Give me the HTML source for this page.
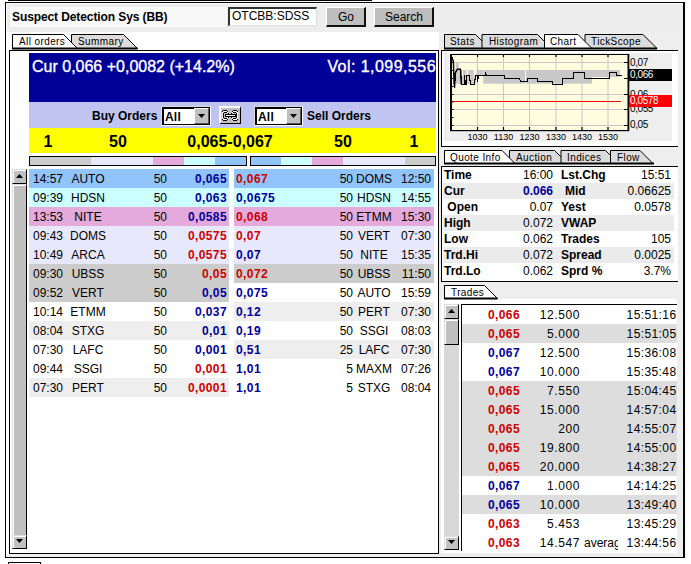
<!DOCTYPE html>
<html><head><meta charset="utf-8"><style>
html,body{margin:0;padding:0;}
body{width:691px;height:564px;overflow:hidden;position:relative;background:#fff;font-family:"Liberation Sans", sans-serif;color:#000;}
body div, body svg{position:absolute;}
.t{white-space:pre;}
</style></head><body>
<div style="left:8px;top:0px;width:364px;height:1px;background:#000"></div><div style="left:5px;top:2px;width:680px;height:556px;background:#eeeeee;border-left:1px solid #000;border-top:1px solid #000;border-right:2px solid #000;border-bottom:1px solid #000;box-sizing:border-box;box-shadow:inset 1px 1px 0 #fff"></div><div style="left:7px;top:4px;width:676px;height:28px;background:#ededed"></div><div style="left:7px;top:32px;width:432px;height:522px;background:#fff"></div><div style="left:441px;top:299px;width:236px;height:254px;background:#fff"></div><div style="left:10px;top:7px;width:217px;height:20px;background:#f9f9f9"></div><div class="t" style="left:12px;top:9px;text-align:left;font-weight:bold;font-size:12px;line-height:16px;letter-spacing:-0.1px">Suspect Detection Sys (BB)</div><div style="left:228px;top:7px;width:89px;height:19px;background:#fff;border-top:2px solid #333;border-left:2px solid #333;border-right:1px solid #ddd;border-bottom:1px solid #ddd;box-sizing:border-box"></div><div class="t" style="left:232px;top:9px;text-align:left;font-size:12px;line-height:15px">OTCBB:SDSS</div><div style="left:326px;top:7px;width:40px;height:20px;background:#bebebe;border-top:1px solid #fff;border-left:1px solid #fff;border-right:2px solid #111;border-bottom:2px solid #111;box-sizing:border-box"></div><div class="t" style="left:326px;top:10px;width:40px;text-align:center;font-size:12px;line-height:14px">Go</div><div style="left:374px;top:7px;width:60px;height:20px;background:#bebebe;border-top:1px solid #fff;border-left:1px solid #fff;border-right:2px solid #111;border-bottom:2px solid #111;box-sizing:border-box"></div><div class="t" style="left:374px;top:10px;width:60px;text-align:center;font-size:12px;line-height:14px">Search</div><svg style="left:0;top:0" width="691" height="564"><polygon points="71.5,48.5 71.5,34.5 123.5,34.5 137.5,48.5" fill="#dcdcdc" stroke="#000" stroke-width="1"/><polygon points="12.5,48.5 12.5,34.5 63.5,34.5 77.5,48.5" fill="#ffffff" stroke="#000" stroke-width="1"/><rect x="12.0" y="47.5" width="125.5" height="2" fill="#000"/></svg><div class="t" style="left:19px;top:36.0px;text-align:left;font-size:10px;line-height:12px;letter-spacing:0.4px">All orders</div><div class="t" style="left:78px;top:36.0px;text-align:left;font-size:10px;line-height:12px;letter-spacing:0.4px">Summary</div><div style="left:9px;top:50px;width:430px;height:504px;background:#fff;border:1px solid #000;box-sizing:border-box"></div><div style="left:29px;top:53px;width:407px;height:49px;background:#000099"></div><div class="t" style="left:32px;top:57px;text-align:left;color:#fff;font-size:16px;line-height:19px;-webkit-text-stroke:0.35px #fff">Cur 0,066 +0,0082 (+14.2%)</div><div class="t" style="left:236px;top:57px;width:200px;text-align:right;color:#fff;font-size:16px;line-height:19px;letter-spacing:0.45px;-webkit-text-stroke:0.35px #fff">Vol: 1,099,556</div><div style="left:29px;top:102px;width:407px;height:26px;background:#c0c4f0"></div><div class="t" style="left:92px;top:109px;text-align:left;font-weight:bold;font-size:12px;line-height:15px">Buy Orders</div><div class="t" style="left:307px;top:109px;text-align:left;font-weight:bold;font-size:12px;line-height:15px">Sell Orders</div><div style="left:161px;top:106px;width:50px;height:20px;border-top:1px solid #dcdcdc;border-left:1px solid #dcdcdc;border-right:1px solid #fff;border-bottom:1px solid #fff;box-sizing:border-box"></div><div style="left:162px;top:107px;width:48px;height:18px;background:#fff;border:1px solid #000;border-top-width:2px;border-left-width:2px;box-sizing:border-box"></div><div class="t" style="left:165px;top:110px;text-align:left;font-weight:bold;font-size:12px;line-height:14px;letter-spacing:0.2px">All</div><div style="left:194px;top:108px;width:15px;height:16px;background:#c0c0c0;border-top:1px solid #fff;border-left:1px solid #fff;border-right:1px solid #555;border-bottom:1px solid #555;box-sizing:border-box"></div><svg style="left:198px;top:114px" width="8" height="5"><polygon points="0,0 7,0 3.5,4" fill="#000"/></svg><div style="left:254px;top:106px;width:49px;height:20px;border-top:1px solid #dcdcdc;border-left:1px solid #dcdcdc;border-right:1px solid #fff;border-bottom:1px solid #fff;box-sizing:border-box"></div><div style="left:255px;top:107px;width:47px;height:18px;background:#fff;border:1px solid #000;border-top-width:2px;border-left-width:2px;box-sizing:border-box"></div><div class="t" style="left:258px;top:110px;text-align:left;font-weight:bold;font-size:12px;line-height:14px;letter-spacing:0.2px">All</div><div style="left:286px;top:108px;width:15px;height:16px;background:#c0c0c0;border-top:1px solid #fff;border-left:1px solid #fff;border-right:1px solid #555;border-bottom:1px solid #555;box-sizing:border-box"></div><svg style="left:290px;top:114px" width="8" height="5"><polygon points="0,0 7,0 3.5,4" fill="#000"/></svg><div style="left:219px;top:106px;width:22px;height:18px;background:#c0c0c0;border-top:2px solid #fff;border-left:2px solid #fff;border-right:1px solid #000;border-bottom:1px solid #000;box-sizing:border-box"></div><svg style="left:220px;top:108px" width="20" height="15" shape-rendering="crispEdges"><rect x="3" y="2" width="4" height="1" fill="#000"/><rect x="13" y="2" width="4" height="1" fill="#000"/><rect x="2" y="3" width="1" height="1" fill="#000"/><rect x="17" y="3" width="1" height="1" fill="#000"/><rect x="7" y="3" width="1" height="1" fill="#000"/><rect x="12" y="3" width="1" height="1" fill="#000"/><rect x="3" y="3" width="4" height="1" fill="#fff"/><rect x="13" y="3" width="4" height="1" fill="#fff"/><rect x="2" y="4" width="1" height="7" fill="#fff"/><rect x="17" y="4" width="1" height="7" fill="#fff"/><rect x="3" y="12" width="4" height="1" fill="#000"/><rect x="13" y="12" width="4" height="1" fill="#000"/><rect x="2" y="11" width="1" height="1" fill="#000"/><rect x="17" y="11" width="1" height="1" fill="#000"/><rect x="7" y="11" width="1" height="1" fill="#000"/><rect x="12" y="11" width="1" height="1" fill="#000"/><rect x="3" y="11" width="4" height="1" fill="#fff"/><rect x="13" y="11" width="4" height="1" fill="#fff"/><rect x="4" y="4" width="3" height="1" fill="#000"/><rect x="13" y="4" width="3" height="1" fill="#000"/><rect x="3" y="5" width="1" height="5" fill="#000"/><rect x="16" y="5" width="1" height="5" fill="#000"/><rect x="4" y="10" width="3" height="1" fill="#000"/><rect x="13" y="10" width="3" height="1" fill="#000"/><rect x="7" y="4" width="1" height="1" fill="#fff"/><rect x="12" y="4" width="1" height="1" fill="#fff"/><rect x="7" y="10" width="1" height="1" fill="#fff"/><rect x="12" y="10" width="1" height="1" fill="#fff"/><rect x="8" y="5" width="1" height="1" fill="#000"/><rect x="11" y="5" width="1" height="1" fill="#000"/><rect x="8" y="9" width="1" height="1" fill="#000"/><rect x="11" y="9" width="1" height="1" fill="#000"/><rect x="5" y="6" width="11" height="3" fill="#000"/><rect x="6" y="7" width="9" height="1" fill="#fff"/></svg><div style="left:29px;top:128px;width:407px;height:25px;background:#ffff00"></div><div class="t" style="left:34px;top:133px;width:28px;text-align:center;font-weight:bold;font-size:16px;line-height:18px">1</div><div class="t" style="left:100px;top:133px;width:36px;text-align:center;font-weight:bold;font-size:16px;line-height:18px">50</div><div class="t" style="left:160px;top:133px;width:140px;text-align:center;font-weight:bold;font-size:16px;line-height:18px">0,065-0,067</div><div class="t" style="left:325px;top:133px;width:36px;text-align:center;font-weight:bold;font-size:16px;line-height:18px">50</div><div class="t" style="left:400px;top:133px;width:28px;text-align:center;font-weight:bold;font-size:16px;line-height:18px">1</div><div style="left:29px;top:156px;width:218px;height:10px;border:1px solid #000;box-sizing:border-box;background:#fff"></div><div style="left:30px;top:157px;width:61px;height:8px;background:#cccccc"></div><div style="left:91px;top:157px;width:62px;height:8px;background:#e8e8fc"></div><div style="left:153px;top:157px;width:31px;height:8px;background:#e4aadc"></div><div style="left:184px;top:157px;width:31px;height:8px;background:#ccffff"></div><div style="left:215px;top:157px;width:31px;height:8px;background:#90c4fa"></div><div style="left:250px;top:156px;width:186px;height:10px;border:1px solid #000;box-sizing:border-box;background:#fff"></div><div style="left:251px;top:157px;width:30px;height:8px;background:#90c4fa"></div><div style="left:281px;top:157px;width:31px;height:8px;background:#ccffff"></div><div style="left:312px;top:157px;width:31px;height:8px;background:#e4aadc"></div><div style="left:343px;top:157px;width:62px;height:8px;background:#e8e8fc"></div><div style="left:405px;top:157px;width:30px;height:8px;background:#cccccc"></div><div style="left:29px;top:169px;width:200px;height:19px;background:#90c4fa"></div><div class="t" style="left:33px;top:172px;text-align:left;font-size:12px;line-height:15px">14:57</div><div class="t" style="left:60px;top:172px;width:56px;text-align:center;font-size:12px;line-height:15px">AUTO</div><div class="t" style="left:130px;top:172px;width:37px;text-align:right;font-size:12px;line-height:15px">50</div><div class="t" style="left:150px;top:172px;width:77px;text-align:right;font-size:12px;line-height:15px;font-weight:bold;letter-spacing:0.4px;color:#000099">0,065</div><div style="left:29px;top:188px;width:200px;height:19px;background:#ccffff"></div><div class="t" style="left:33px;top:191px;text-align:left;font-size:12px;line-height:15px">09:39</div><div class="t" style="left:60px;top:191px;width:56px;text-align:center;font-size:12px;line-height:15px">HDSN</div><div class="t" style="left:130px;top:191px;width:37px;text-align:right;font-size:12px;line-height:15px">50</div><div class="t" style="left:150px;top:191px;width:77px;text-align:right;font-size:12px;line-height:15px;font-weight:bold;letter-spacing:0.4px;color:#000099">0,063</div><div style="left:29px;top:207px;width:200px;height:19px;background:#e4aadc"></div><div class="t" style="left:33px;top:210px;text-align:left;font-size:12px;line-height:15px">13:53</div><div class="t" style="left:60px;top:210px;width:56px;text-align:center;font-size:12px;line-height:15px">NITE</div><div class="t" style="left:130px;top:210px;width:37px;text-align:right;font-size:12px;line-height:15px">50</div><div class="t" style="left:150px;top:210px;width:77px;text-align:right;font-size:12px;line-height:15px;font-weight:bold;letter-spacing:0.4px;color:#000099">0,0585</div><div style="left:29px;top:226px;width:200px;height:19px;background:#e8e8fc"></div><div class="t" style="left:33px;top:229px;text-align:left;font-size:12px;line-height:15px">09:43</div><div class="t" style="left:60px;top:229px;width:56px;text-align:center;font-size:12px;line-height:15px">DOMS</div><div class="t" style="left:130px;top:229px;width:37px;text-align:right;font-size:12px;line-height:15px">50</div><div class="t" style="left:150px;top:229px;width:77px;text-align:right;font-size:12px;line-height:15px;font-weight:bold;letter-spacing:0.4px;color:#cc0000">0,0575</div><div style="left:29px;top:245px;width:200px;height:19px;background:#e8e8fc"></div><div class="t" style="left:33px;top:248px;text-align:left;font-size:12px;line-height:15px">10:49</div><div class="t" style="left:60px;top:248px;width:56px;text-align:center;font-size:12px;line-height:15px">ARCA</div><div class="t" style="left:130px;top:248px;width:37px;text-align:right;font-size:12px;line-height:15px">50</div><div class="t" style="left:150px;top:248px;width:77px;text-align:right;font-size:12px;line-height:15px;font-weight:bold;letter-spacing:0.4px;color:#cc0000">0,0575</div><div style="left:29px;top:264px;width:200px;height:19px;background:#cccccc"></div><div class="t" style="left:33px;top:267px;text-align:left;font-size:12px;line-height:15px">09:30</div><div class="t" style="left:60px;top:267px;width:56px;text-align:center;font-size:12px;line-height:15px">UBSS</div><div class="t" style="left:130px;top:267px;width:37px;text-align:right;font-size:12px;line-height:15px">50</div><div class="t" style="left:150px;top:267px;width:77px;text-align:right;font-size:12px;line-height:15px;font-weight:bold;letter-spacing:0.4px;color:#cc0000">0,05</div><div style="left:29px;top:283px;width:200px;height:19px;background:#cccccc"></div><div class="t" style="left:33px;top:286px;text-align:left;font-size:12px;line-height:15px">09:52</div><div class="t" style="left:60px;top:286px;width:56px;text-align:center;font-size:12px;line-height:15px">VERT</div><div class="t" style="left:130px;top:286px;width:37px;text-align:right;font-size:12px;line-height:15px">50</div><div class="t" style="left:150px;top:286px;width:77px;text-align:right;font-size:12px;line-height:15px;font-weight:bold;letter-spacing:0.4px;color:#000099">0,05</div><div style="left:29px;top:302px;width:200px;height:19px;background:#ffffff"></div><div class="t" style="left:33px;top:305px;text-align:left;font-size:12px;line-height:15px">10:14</div><div class="t" style="left:60px;top:305px;width:56px;text-align:center;font-size:12px;line-height:15px">ETMM</div><div class="t" style="left:130px;top:305px;width:37px;text-align:right;font-size:12px;line-height:15px">50</div><div class="t" style="left:150px;top:305px;width:77px;text-align:right;font-size:12px;line-height:15px;font-weight:bold;letter-spacing:0.4px;color:#000099">0,037</div><div style="left:29px;top:321px;width:200px;height:19px;background:#eeeeee"></div><div class="t" style="left:33px;top:324px;text-align:left;font-size:12px;line-height:15px">08:04</div><div class="t" style="left:60px;top:324px;width:56px;text-align:center;font-size:12px;line-height:15px">STXG</div><div class="t" style="left:130px;top:324px;width:37px;text-align:right;font-size:12px;line-height:15px">50</div><div class="t" style="left:150px;top:324px;width:77px;text-align:right;font-size:12px;line-height:15px;font-weight:bold;letter-spacing:0.4px;color:#000099">0,01</div><div style="left:29px;top:340px;width:200px;height:19px;background:#ffffff"></div><div class="t" style="left:33px;top:343px;text-align:left;font-size:12px;line-height:15px">07:30</div><div class="t" style="left:60px;top:343px;width:56px;text-align:center;font-size:12px;line-height:15px">LAFC</div><div class="t" style="left:130px;top:343px;width:37px;text-align:right;font-size:12px;line-height:15px">50</div><div class="t" style="left:150px;top:343px;width:77px;text-align:right;font-size:12px;line-height:15px;font-weight:bold;letter-spacing:0.4px;color:#000099">0,001</div><div style="left:29px;top:359px;width:200px;height:19px;background:#ffffff"></div><div class="t" style="left:33px;top:362px;text-align:left;font-size:12px;line-height:15px">09:44</div><div class="t" style="left:60px;top:362px;width:56px;text-align:center;font-size:12px;line-height:15px">SSGI</div><div class="t" style="left:130px;top:362px;width:37px;text-align:right;font-size:12px;line-height:15px">50</div><div class="t" style="left:150px;top:362px;width:77px;text-align:right;font-size:12px;line-height:15px;font-weight:bold;letter-spacing:0.4px;color:#cc0000">0,001</div><div style="left:29px;top:378px;width:200px;height:19px;background:#eeeeee"></div><div class="t" style="left:33px;top:381px;text-align:left;font-size:12px;line-height:15px">07:30</div><div class="t" style="left:60px;top:381px;width:56px;text-align:center;font-size:12px;line-height:15px">PERT</div><div class="t" style="left:130px;top:381px;width:37px;text-align:right;font-size:12px;line-height:15px">50</div><div class="t" style="left:150px;top:381px;width:77px;text-align:right;font-size:12px;line-height:15px;font-weight:bold;letter-spacing:0.4px;color:#cc0000">0,0001</div><div style="left:234px;top:169px;width:200px;height:19px;background:#90c4fa"></div><div class="t" style="left:236px;top:172px;text-align:left;font-size:12px;line-height:15px;font-weight:bold;letter-spacing:0.4px;color:#cc0000">0,067</div><div class="t" style="left:316px;top:172px;width:37px;text-align:right;font-size:12px;line-height:15px">50</div><div class="t" style="left:350px;top:172px;width:48px;text-align:center;font-size:12px;line-height:15px">DOMS</div><div class="t" style="left:380px;top:172px;width:51px;text-align:right;font-size:12px;line-height:15px">12:50</div><div style="left:234px;top:188px;width:200px;height:19px;background:#ccffff"></div><div class="t" style="left:236px;top:191px;text-align:left;font-size:12px;line-height:15px;font-weight:bold;letter-spacing:0.4px;color:#000099">0,0675</div><div class="t" style="left:316px;top:191px;width:37px;text-align:right;font-size:12px;line-height:15px">50</div><div class="t" style="left:350px;top:191px;width:48px;text-align:center;font-size:12px;line-height:15px">HDSN</div><div class="t" style="left:380px;top:191px;width:51px;text-align:right;font-size:12px;line-height:15px">14:55</div><div style="left:234px;top:207px;width:200px;height:19px;background:#e4aadc"></div><div class="t" style="left:236px;top:210px;text-align:left;font-size:12px;line-height:15px;font-weight:bold;letter-spacing:0.4px;color:#cc0000">0,068</div><div class="t" style="left:316px;top:210px;width:37px;text-align:right;font-size:12px;line-height:15px">50</div><div class="t" style="left:350px;top:210px;width:48px;text-align:center;font-size:12px;line-height:15px">ETMM</div><div class="t" style="left:380px;top:210px;width:51px;text-align:right;font-size:12px;line-height:15px">15:30</div><div style="left:234px;top:226px;width:200px;height:19px;background:#e8e8fc"></div><div class="t" style="left:236px;top:229px;text-align:left;font-size:12px;line-height:15px;font-weight:bold;letter-spacing:0.4px;color:#cc0000">0,07</div><div class="t" style="left:316px;top:229px;width:37px;text-align:right;font-size:12px;line-height:15px">50</div><div class="t" style="left:350px;top:229px;width:48px;text-align:center;font-size:12px;line-height:15px">VERT</div><div class="t" style="left:380px;top:229px;width:51px;text-align:right;font-size:12px;line-height:15px">07:30</div><div style="left:234px;top:245px;width:200px;height:19px;background:#e8e8fc"></div><div class="t" style="left:236px;top:248px;text-align:left;font-size:12px;line-height:15px;font-weight:bold;letter-spacing:0.4px;color:#000099">0,07</div><div class="t" style="left:316px;top:248px;width:37px;text-align:right;font-size:12px;line-height:15px">50</div><div class="t" style="left:350px;top:248px;width:48px;text-align:center;font-size:12px;line-height:15px">NITE</div><div class="t" style="left:380px;top:248px;width:51px;text-align:right;font-size:12px;line-height:15px">15:35</div><div style="left:234px;top:264px;width:200px;height:19px;background:#cccccc"></div><div class="t" style="left:236px;top:267px;text-align:left;font-size:12px;line-height:15px;font-weight:bold;letter-spacing:0.4px;color:#cc0000">0,072</div><div class="t" style="left:316px;top:267px;width:37px;text-align:right;font-size:12px;line-height:15px">50</div><div class="t" style="left:350px;top:267px;width:48px;text-align:center;font-size:12px;line-height:15px">UBSS</div><div class="t" style="left:380px;top:267px;width:51px;text-align:right;font-size:12px;line-height:15px">11:50</div><div style="left:234px;top:283px;width:200px;height:19px;background:#ffffff"></div><div class="t" style="left:236px;top:286px;text-align:left;font-size:12px;line-height:15px;font-weight:bold;letter-spacing:0.4px;color:#000099">0,075</div><div class="t" style="left:316px;top:286px;width:37px;text-align:right;font-size:12px;line-height:15px">50</div><div class="t" style="left:350px;top:286px;width:48px;text-align:center;font-size:12px;line-height:15px">AUTO</div><div class="t" style="left:380px;top:286px;width:51px;text-align:right;font-size:12px;line-height:15px">15:59</div><div style="left:234px;top:302px;width:200px;height:19px;background:#eeeeee"></div><div class="t" style="left:236px;top:305px;text-align:left;font-size:12px;line-height:15px;font-weight:bold;letter-spacing:0.4px;color:#000099">0,12</div><div class="t" style="left:316px;top:305px;width:37px;text-align:right;font-size:12px;line-height:15px">50</div><div class="t" style="left:350px;top:305px;width:48px;text-align:center;font-size:12px;line-height:15px">PERT</div><div class="t" style="left:380px;top:305px;width:51px;text-align:right;font-size:12px;line-height:15px">07:30</div><div style="left:234px;top:321px;width:200px;height:19px;background:#ffffff"></div><div class="t" style="left:236px;top:324px;text-align:left;font-size:12px;line-height:15px;font-weight:bold;letter-spacing:0.4px;color:#000099">0,19</div><div class="t" style="left:316px;top:324px;width:37px;text-align:right;font-size:12px;line-height:15px">50</div><div class="t" style="left:350px;top:324px;width:48px;text-align:center;font-size:12px;line-height:15px">SSGI</div><div class="t" style="left:380px;top:324px;width:51px;text-align:right;font-size:12px;line-height:15px">08:03</div><div style="left:234px;top:340px;width:200px;height:19px;background:#eeeeee"></div><div class="t" style="left:236px;top:343px;text-align:left;font-size:12px;line-height:15px;font-weight:bold;letter-spacing:0.4px;color:#000099">0,51</div><div class="t" style="left:316px;top:343px;width:37px;text-align:right;font-size:12px;line-height:15px">25</div><div class="t" style="left:350px;top:343px;width:48px;text-align:center;font-size:12px;line-height:15px">LAFC</div><div class="t" style="left:380px;top:343px;width:51px;text-align:right;font-size:12px;line-height:15px">07:30</div><div style="left:234px;top:359px;width:200px;height:19px;background:#ffffff"></div><div class="t" style="left:236px;top:362px;text-align:left;font-size:12px;line-height:15px;font-weight:bold;letter-spacing:0.4px;color:#000099">1,01</div><div class="t" style="left:316px;top:362px;width:37px;text-align:right;font-size:12px;line-height:15px">5</div><div class="t" style="left:350px;top:362px;width:48px;text-align:center;font-size:12px;line-height:15px">MAXM</div><div class="t" style="left:380px;top:362px;width:51px;text-align:right;font-size:12px;line-height:15px">07:26</div><div style="left:234px;top:378px;width:200px;height:19px;background:#ffffff"></div><div class="t" style="left:236px;top:381px;text-align:left;font-size:12px;line-height:15px;font-weight:bold;letter-spacing:0.4px;color:#000099">1,01</div><div class="t" style="left:316px;top:381px;width:37px;text-align:right;font-size:12px;line-height:15px">5</div><div class="t" style="left:350px;top:381px;width:48px;text-align:center;font-size:12px;line-height:15px">STXG</div><div class="t" style="left:380px;top:381px;width:51px;text-align:right;font-size:12px;line-height:15px">08:04</div><div style="left:12px;top:169px;width:15px;height:15px;background:#c0c0c0;border-top:1px solid #dcdcdc;border-left:1px solid #dcdcdc;box-shadow:inset 1px 1px 0 #fff;border-right:1px solid #000;box-sizing:border-box;border-bottom:1px solid #000"></div><svg style="left:16px;top:174px" width="8" height="5"><polygon points="0,4 7,4 3.5,0" fill="#000"/></svg><div style="left:12px;top:184px;width:15px;height:351px;background:#c0c0c0;border-top:1px solid #dcdcdc;border-left:1px solid #dcdcdc;box-shadow:inset 1px 1px 0 #fff;border-right:1px solid #000;box-sizing:border-box"></div><div style="left:12px;top:535px;width:15px;height:14px;background:#c0c0c0;border-top:1px solid #dcdcdc;border-left:1px solid #dcdcdc;box-shadow:inset 1px 1px 0 #fff;border-right:1px solid #000;box-sizing:border-box;border-bottom:1px solid #000"></div><svg style="left:16px;top:539px" width="8" height="5"><polygon points="0,0 7,0 3.5,4" fill="#000"/></svg><svg style="left:0;top:0" width="691" height="564"><polygon points="444.5,48.5 444.5,34.5 475.5,34.5 489.5,48.5" fill="#dcdcdc" stroke="#000" stroke-width="1"/><polygon points="482,48.5 482,34.5 537.5,34.5 551.5,48.5" fill="#dcdcdc" stroke="#000" stroke-width="1"/><polygon points="585,48.5 585,34.5 643,34.5 657.0,48.5" fill="#dcdcdc" stroke="#000" stroke-width="1"/><polygon points="544.5,48.5 544.5,34.5 578,34.5 592.0,48.5" fill="#ffffff" stroke="#000" stroke-width="1"/><rect x="444.0" y="47.5" width="213.0" height="2" fill="#000"/></svg><div class="t" style="left:450px;top:36.0px;text-align:left;font-size:10px;line-height:12px;letter-spacing:0.4px">Stats</div><div class="t" style="left:489px;top:36.0px;text-align:left;font-size:10px;line-height:12px;letter-spacing:0.4px">Histogram</div><div class="t" style="left:550px;top:36.0px;text-align:left;font-size:10px;line-height:12px;letter-spacing:0.4px">Chart</div><div class="t" style="left:591px;top:36.0px;text-align:left;font-size:10px;line-height:12px;letter-spacing:0.4px">TickScope</div><div style="left:441px;top:50px;width:237px;height:97px;background:#ffffff;border-left:1px solid #000;border-top:1px solid #000;border-bottom:1px solid #000;box-shadow:inset 1px 1px #fff;box-sizing:border-box"></div><div style="left:444px;top:53px;width:228px;height:88px;background:#eeeeee"></div><div style="left:449px;top:53px;width:1px;height:78px;background:#fff"></div><svg style="left:0;top:0" width="691" height="564"><rect x="451" y="54.5" width="177" height="76" fill="#fffce0"/><line x1="477.5" y1="55" x2="477.5" y2="130" stroke="#c8c8c8" stroke-width="1"/><line x1="503.5" y1="55" x2="503.5" y2="130" stroke="#c8c8c8" stroke-width="1"/><line x1="529.5" y1="55" x2="529.5" y2="130" stroke="#c8c8c8" stroke-width="1"/><line x1="556" y1="55" x2="556" y2="130" stroke="#c8c8c8" stroke-width="1"/><line x1="582" y1="55" x2="582" y2="130" stroke="#c8c8c8" stroke-width="1"/><line x1="608" y1="55" x2="608" y2="130" stroke="#c8c8c8" stroke-width="1"/><line x1="452" y1="62.5" x2="627" y2="62.5" stroke="#c8c8c8" stroke-width="1"/><line x1="452" y1="94.5" x2="627" y2="94.5" stroke="#c8c8c8" stroke-width="1"/><line x1="452" y1="109.5" x2="627" y2="109.5" stroke="#c8c8c8" stroke-width="1"/><line x1="452" y1="125.5" x2="627" y2="125.5" stroke="#c8c8c8" stroke-width="1"/><rect x="455.8" y="62.6" width="2.8999999999999773" height="21.1" fill="#c8c8c8"/><rect x="458.7" y="70" width="2.0" height="13.700000000000003" fill="#c8c8c8"/><rect x="460.7" y="75.5" width="2.3000000000000114" height="8.200000000000003" fill="#c8c8c8"/><rect x="463" y="70" width="3.5" height="13.700000000000003" fill="#c8c8c8"/><rect x="466.5" y="75.5" width="1.6999999999999886" height="8.200000000000003" fill="#c8c8c8"/><rect x="468.2" y="70" width="5.5" height="13.700000000000003" fill="#c8c8c8"/><rect x="473.7" y="75.5" width="2.6000000000000227" height="8.200000000000003" fill="#c8c8c8"/><rect x="476.3" y="70" width="7.0" height="5.5" fill="#c8c8c8"/><rect x="483.3" y="70" width="41.69999999999999" height="13.700000000000003" fill="#c8c8c8"/><rect x="526" y="70" width="66" height="13.700000000000003" fill="#c8c8c8"/><rect x="592" y="70" width="28" height="7" fill="#c8c8c8"/><line x1="452" y1="101.5" x2="621" y2="101.5" stroke="#ff0000" stroke-width="1" shape-rendering="crispEdges"/><polyline fill="none" stroke="#000" stroke-width="1.4" points="451,56.5 452.3,58.7 453.2,61 453.5,63 454,83 454.6,87.5 455.3,73 456.3,70.7 457.5,69.3 460.4,69.3 460.8,70.5 461.2,84.3"/><polyline fill="none" stroke="#000" stroke-width="1.1" stroke-linejoin="miter" shape-rendering="crispEdges" points="451.5,56.5 452.5,58.5 453.5,61.5 453.5,63.5 454.5,83.5 454.5,87.5 455.5,73.5 456.5,70.5 457.5,69.5 460.5,69.5 460.5,70.5 461.5,84.5 464.5,84.5 464.5,75.5 465.5,84.5 466.5,84.5 466.5,75.5 469.5,75.5 470.5,84.5 474.5,84.5 475.5,75.5 477.5,75.5 477.5,81.5 478.5,75.5 485.5,75.5 485.5,72.5 486.5,75.5 504.5,75.5 504.5,78.5 519.5,78.5 520.5,81.5 527.5,81.5 527.5,78.5 537.5,78.5 537.5,81.5 552.5,81.5 552.5,84.5 562.5,84.5 562.5,78.5 573.5,78.5 573.5,72.5 584.5,72.5 584.5,78.5 609.5,78.5 609.5,72.5 616.5,72.5 616.5,75.5 621.5,75.5"/><rect x="450" y="54" width="179" height="1" fill="#000"/><rect x="450" y="54" width="2" height="77" fill="#000"/><rect x="627.5" y="54" width="1.8" height="77" fill="#000"/><rect x="450" y="130" width="179" height="1.2" fill="#000"/><line x1="477.5" y1="127" x2="477.5" y2="130" stroke="#000" stroke-width="1.2"/><line x1="477.5" y1="55" x2="477.5" y2="57" stroke="#000" stroke-width="1.2"/><line x1="503.5" y1="127" x2="503.5" y2="130" stroke="#000" stroke-width="1.2"/><line x1="503.5" y1="55" x2="503.5" y2="57" stroke="#000" stroke-width="1.2"/><line x1="529.5" y1="127" x2="529.5" y2="130" stroke="#000" stroke-width="1.2"/><line x1="529.5" y1="55" x2="529.5" y2="57" stroke="#000" stroke-width="1.2"/><line x1="556" y1="127" x2="556" y2="130" stroke="#000" stroke-width="1.2"/><line x1="556" y1="55" x2="556" y2="57" stroke="#000" stroke-width="1.2"/><line x1="582" y1="127" x2="582" y2="130" stroke="#000" stroke-width="1.2"/><line x1="582" y1="55" x2="582" y2="57" stroke="#000" stroke-width="1.2"/><line x1="608" y1="127" x2="608" y2="130" stroke="#000" stroke-width="1.2"/><line x1="608" y1="55" x2="608" y2="57" stroke="#000" stroke-width="1.2"/><line x1="452" y1="62.5" x2="453.5" y2="62.5" stroke="#000" stroke-width="1"/><line x1="452" y1="70.5" x2="453.5" y2="70.5" stroke="#000" stroke-width="1"/><line x1="452" y1="78.5" x2="453.5" y2="78.5" stroke="#000" stroke-width="1"/><line x1="452" y1="86.5" x2="453.5" y2="86.5" stroke="#000" stroke-width="1"/><line x1="452" y1="94.5" x2="453.5" y2="94.5" stroke="#000" stroke-width="1"/><line x1="452" y1="102" x2="453.5" y2="102" stroke="#000" stroke-width="1"/><line x1="452" y1="109.5" x2="453.5" y2="109.5" stroke="#000" stroke-width="1"/><line x1="452" y1="117.5" x2="453.5" y2="117.5" stroke="#000" stroke-width="1"/><line x1="452" y1="125.5" x2="453.5" y2="125.5" stroke="#000" stroke-width="1"/><line x1="624" y1="62.5" x2="628" y2="62.5" stroke="#000" stroke-width="1"/><line x1="624" y1="78.5" x2="628" y2="78.5" stroke="#000" stroke-width="1"/><line x1="624" y1="94.5" x2="628" y2="94.5" stroke="#000" stroke-width="1"/><line x1="624" y1="109.5" x2="628" y2="109.5" stroke="#000" stroke-width="1"/><line x1="624" y1="125.5" x2="628" y2="125.5" stroke="#000" stroke-width="1"/></svg><div class="t" style="left:630px;top:56.5px;text-align:left;font-size:10px;line-height:11px;letter-spacing:-0.4px">0,07</div><div class="t" style="left:630px;top:88.5px;text-align:left;font-size:10px;line-height:11px;letter-spacing:-0.4px">0,06</div><div class="t" style="left:630px;top:102.5px;text-align:left;font-size:10px;line-height:11px;letter-spacing:-0.4px">0,055</div><div class="t" style="left:630px;top:119px;text-align:left;font-size:10px;line-height:11px;letter-spacing:-0.4px">0,05</div><div style="left:629px;top:69px;width:43px;height:12px;background:#000"></div><div class="t" style="left:630px;top:69px;text-align:left;font-size:10px;line-height:11px;letter-spacing:-0.4px;color:#fff">0,066</div><div style="left:629px;top:95px;width:43px;height:12px;background:#ff0000"></div><div class="t" style="left:630px;top:95px;text-align:left;font-size:10px;line-height:11px;letter-spacing:-0.4px;color:#fff">0,0578</div><div class="t" style="left:462.5px;top:132px;width:30px;text-align:center;font-size:9px;line-height:10px">1030</div><div class="t" style="left:488.5px;top:132px;width:30px;text-align:center;font-size:9px;line-height:10px">1130</div><div class="t" style="left:514.5px;top:132px;width:30px;text-align:center;font-size:9px;line-height:10px">1230</div><div class="t" style="left:541px;top:132px;width:30px;text-align:center;font-size:9px;line-height:10px">1330</div><div class="t" style="left:567px;top:132px;width:30px;text-align:center;font-size:9px;line-height:10px">1430</div><div class="t" style="left:593px;top:132px;width:30px;text-align:center;font-size:9px;line-height:10px">1530</div><svg style="left:0;top:0" width="691" height="564"><polygon points="509.5,163.5 509.5,150.5 554.5,150.5 567.5,163.5" fill="#dcdcdc" stroke="#000" stroke-width="1"/><polygon points="561,163.5 561,150.5 605.5,150.5 618.5,163.5" fill="#dcdcdc" stroke="#000" stroke-width="1"/><polygon points="610.5,163.5 610.5,150.5 640,150.5 653.0,163.5" fill="#dcdcdc" stroke="#000" stroke-width="1"/><polygon points="444.5,163.5 444.5,150.5 502,150.5 515.0,163.5" fill="#ffffff" stroke="#000" stroke-width="1"/><rect x="444.0" y="162.5" width="210.0" height="2" fill="#000"/></svg><div class="t" style="left:450px;top:152.0px;text-align:left;font-size:10px;line-height:12px;letter-spacing:0.4px">Quote Info</div><div class="t" style="left:516px;top:152.0px;text-align:left;font-size:10px;line-height:12px;letter-spacing:0.4px">Auction</div><div class="t" style="left:567px;top:152.0px;text-align:left;font-size:10px;line-height:12px;letter-spacing:0.4px">Indices</div><div class="t" style="left:617px;top:152.0px;text-align:left;font-size:10px;line-height:12px;letter-spacing:0.4px">Flow</div><div style="left:441px;top:166px;width:237px;height:116px;background:#fff;border:1px solid #000;border-right:none;box-sizing:border-box"></div><div class="t" style="left:444px;top:168px;text-align:left;font-weight:bold;font-size:12px;line-height:15px">Time</div><div class="t" style="left:500px;top:168px;width:53px;text-align:right;font-size:12px;line-height:15px">16:00</div><div class="t" style="left:561px;top:168px;text-align:left;font-weight:bold;font-size:12px;line-height:15px">Lst.Chg</div><div class="t" style="left:610px;top:168px;width:61px;text-align:right;font-size:12px;line-height:15px">15:51</div><div style="left:443px;top:183px;width:231px;height:16px;background:#ebebeb"></div><div class="t" style="left:444px;top:184px;text-align:left;font-weight:bold;font-size:12px;line-height:15px">Cur</div><div class="t" style="left:500px;top:184px;width:53px;text-align:right;font-size:12px;line-height:15px"><span style="color:#000099;font-weight:bold">0.066</span></div><div class="t" style="left:565px;top:184px;text-align:left;font-weight:bold;font-size:12px;line-height:15px">Mid</div><div class="t" style="left:610px;top:184px;width:61px;text-align:right;font-size:12px;line-height:15px">0.06625</div><div class="t" style="left:444px;top:200px;text-align:left;font-weight:bold;font-size:12px;line-height:15px">&nbsp;Open</div><div class="t" style="left:500px;top:200px;width:53px;text-align:right;font-size:12px;line-height:15px">0.07</div><div class="t" style="left:561px;top:200px;text-align:left;font-weight:bold;font-size:12px;line-height:15px">Yest</div><div class="t" style="left:610px;top:200px;width:61px;text-align:right;font-size:12px;line-height:15px">0.0578</div><div style="left:443px;top:215px;width:231px;height:16px;background:#ebebeb"></div><div class="t" style="left:444px;top:216px;text-align:left;font-weight:bold;font-size:12px;line-height:15px">High</div><div class="t" style="left:500px;top:216px;width:53px;text-align:right;font-size:12px;line-height:15px">0.072</div><div class="t" style="left:561px;top:216px;text-align:left;font-weight:bold;font-size:12px;line-height:15px">VWAP</div><div class="t" style="left:610px;top:216px;width:61px;text-align:right;font-size:12px;line-height:15px"></div><div class="t" style="left:444px;top:232px;text-align:left;font-weight:bold;font-size:12px;line-height:15px">Low</div><div class="t" style="left:500px;top:232px;width:53px;text-align:right;font-size:12px;line-height:15px">0.062</div><div class="t" style="left:561px;top:232px;text-align:left;font-weight:bold;font-size:12px;line-height:15px">Trades</div><div class="t" style="left:610px;top:232px;width:61px;text-align:right;font-size:12px;line-height:15px">105</div><div style="left:443px;top:247px;width:231px;height:16px;background:#ebebeb"></div><div class="t" style="left:444px;top:248px;text-align:left;font-weight:bold;font-size:12px;line-height:15px">Trd.Hi</div><div class="t" style="left:500px;top:248px;width:53px;text-align:right;font-size:12px;line-height:15px">0.072</div><div class="t" style="left:561px;top:248px;text-align:left;font-weight:bold;font-size:12px;line-height:15px">Spread</div><div class="t" style="left:610px;top:248px;width:61px;text-align:right;font-size:12px;line-height:15px">0.0025</div><div class="t" style="left:444px;top:264px;text-align:left;font-weight:bold;font-size:12px;line-height:15px">Trd.Lo</div><div class="t" style="left:500px;top:264px;width:53px;text-align:right;font-size:12px;line-height:15px">0.062</div><div class="t" style="left:561px;top:264px;text-align:left;font-weight:bold;font-size:12px;line-height:15px">Sprd %</div><div class="t" style="left:610px;top:264px;width:61px;text-align:right;font-size:12px;line-height:15px">3.7%</div><svg style="left:0;top:0" width="691" height="564"><polygon points="444.5,298.5 444.5,285.5 484.5,285.5 497.5,298.5" fill="#ffffff" stroke="#000" stroke-width="1"/><rect x="444.0" y="297.5" width="53.5" height="2" fill="#000"/></svg><div class="t" style="left:451px;top:287.0px;text-align:left;font-size:10px;line-height:12px;letter-spacing:0.4px">Trades</div><div style="left:444px;top:304px;width:15px;height:15px;background:#c0c0c0;border-top:1px solid #dcdcdc;border-left:1px solid #dcdcdc;box-shadow:inset 1px 1px 0 #fff;border-right:1px solid #000;box-sizing:border-box;border-bottom:1px solid #000"></div><svg style="left:448px;top:309px" width="8" height="5"><polygon points="0,4 7,4 3.5,0" fill="#000"/></svg><div style="left:444px;top:319px;width:15px;height:217px;background:#d8d8d8"></div><div style="left:444px;top:319px;width:15px;height:26px;background:#c0c0c0;border-top:1px solid #dcdcdc;border-left:1px solid #dcdcdc;box-shadow:inset 1px 1px 0 #fff;border-right:1px solid #000;box-sizing:border-box;border-bottom:1px solid #000"></div><div style="left:444px;top:536px;width:15px;height:14px;background:#c0c0c0;border-top:1px solid #dcdcdc;border-left:1px solid #dcdcdc;box-shadow:inset 1px 1px 0 #fff;border-right:1px solid #000;box-sizing:border-box;border-bottom:1px solid #000"></div><svg style="left:448px;top:540px" width="8" height="5"><polygon points="0,0 7,0 3.5,4" fill="#000"/></svg><div style="left:461px;top:304px;width:216px;height:247px;background:#fff;border-left:1px solid #000;border-top:1px solid #000;box-sizing:border-box"></div><div style="left:462px;top:305px;width:215px;height:19px;background:#ffffff"></div><div class="t" style="left:471px;top:308px;width:49px;text-align:right;font-size:12px;line-height:15px;font-weight:bold;letter-spacing:0.4px;color:#cc0000">0,066</div><div class="t" style="left:520px;top:308px;width:60px;text-align:right;font-size:12px;line-height:15px;letter-spacing:0.6px">12.500</div><div class="t" style="left:600px;top:308px;width:76.5px;text-align:right;font-size:12px;line-height:15px;letter-spacing:0.4px">15:51:16</div><div style="left:462px;top:324px;width:215px;height:19px;background:#dddddd"></div><div class="t" style="left:471px;top:327px;width:49px;text-align:right;font-size:12px;line-height:15px;font-weight:bold;letter-spacing:0.4px;color:#cc0000">0,065</div><div class="t" style="left:520px;top:327px;width:60px;text-align:right;font-size:12px;line-height:15px;letter-spacing:0.6px">5.000</div><div class="t" style="left:600px;top:327px;width:76.5px;text-align:right;font-size:12px;line-height:15px;letter-spacing:0.4px">15:51:05</div><div style="left:462px;top:343px;width:215px;height:19px;background:#ffffff"></div><div class="t" style="left:471px;top:346px;width:49px;text-align:right;font-size:12px;line-height:15px;font-weight:bold;letter-spacing:0.4px;color:#000099">0,067</div><div class="t" style="left:520px;top:346px;width:60px;text-align:right;font-size:12px;line-height:15px;letter-spacing:0.6px">12.500</div><div class="t" style="left:600px;top:346px;width:76.5px;text-align:right;font-size:12px;line-height:15px;letter-spacing:0.4px">15:36:08</div><div style="left:462px;top:362px;width:215px;height:19px;background:#ffffff"></div><div class="t" style="left:471px;top:365px;width:49px;text-align:right;font-size:12px;line-height:15px;font-weight:bold;letter-spacing:0.4px;color:#000099">0,067</div><div class="t" style="left:520px;top:365px;width:60px;text-align:right;font-size:12px;line-height:15px;letter-spacing:0.6px">10.000</div><div class="t" style="left:600px;top:365px;width:76.5px;text-align:right;font-size:12px;line-height:15px;letter-spacing:0.4px">15:35:48</div><div style="left:462px;top:381px;width:215px;height:19px;background:#dddddd"></div><div class="t" style="left:471px;top:384px;width:49px;text-align:right;font-size:12px;line-height:15px;font-weight:bold;letter-spacing:0.4px;color:#cc0000">0,065</div><div class="t" style="left:520px;top:384px;width:60px;text-align:right;font-size:12px;line-height:15px;letter-spacing:0.6px">7.550</div><div class="t" style="left:600px;top:384px;width:76.5px;text-align:right;font-size:12px;line-height:15px;letter-spacing:0.4px">15:04:45</div><div style="left:462px;top:400px;width:215px;height:19px;background:#dddddd"></div><div class="t" style="left:471px;top:403px;width:49px;text-align:right;font-size:12px;line-height:15px;font-weight:bold;letter-spacing:0.4px;color:#cc0000">0,065</div><div class="t" style="left:520px;top:403px;width:60px;text-align:right;font-size:12px;line-height:15px;letter-spacing:0.6px">15.000</div><div class="t" style="left:600px;top:403px;width:76.5px;text-align:right;font-size:12px;line-height:15px;letter-spacing:0.4px">14:57:04</div><div style="left:462px;top:419px;width:215px;height:19px;background:#dddddd"></div><div class="t" style="left:471px;top:422px;width:49px;text-align:right;font-size:12px;line-height:15px;font-weight:bold;letter-spacing:0.4px;color:#cc0000">0,065</div><div class="t" style="left:520px;top:422px;width:60px;text-align:right;font-size:12px;line-height:15px;letter-spacing:0.6px">200</div><div class="t" style="left:600px;top:422px;width:76.5px;text-align:right;font-size:12px;line-height:15px;letter-spacing:0.4px">14:55:07</div><div style="left:462px;top:438px;width:215px;height:19px;background:#dddddd"></div><div class="t" style="left:471px;top:441px;width:49px;text-align:right;font-size:12px;line-height:15px;font-weight:bold;letter-spacing:0.4px;color:#cc0000">0,065</div><div class="t" style="left:520px;top:441px;width:60px;text-align:right;font-size:12px;line-height:15px;letter-spacing:0.6px">19.800</div><div class="t" style="left:600px;top:441px;width:76.5px;text-align:right;font-size:12px;line-height:15px;letter-spacing:0.4px">14:55:00</div><div style="left:462px;top:457px;width:215px;height:19px;background:#dddddd"></div><div class="t" style="left:471px;top:460px;width:49px;text-align:right;font-size:12px;line-height:15px;font-weight:bold;letter-spacing:0.4px;color:#cc0000">0,065</div><div class="t" style="left:520px;top:460px;width:60px;text-align:right;font-size:12px;line-height:15px;letter-spacing:0.6px">20.000</div><div class="t" style="left:600px;top:460px;width:76.5px;text-align:right;font-size:12px;line-height:15px;letter-spacing:0.4px">14:38:27</div><div style="left:462px;top:476px;width:215px;height:19px;background:#ffffff"></div><div class="t" style="left:471px;top:479px;width:49px;text-align:right;font-size:12px;line-height:15px;font-weight:bold;letter-spacing:0.4px;color:#000099">0,067</div><div class="t" style="left:520px;top:479px;width:60px;text-align:right;font-size:12px;line-height:15px;letter-spacing:0.6px">1.000</div><div class="t" style="left:600px;top:479px;width:76.5px;text-align:right;font-size:12px;line-height:15px;letter-spacing:0.4px">14:14:25</div><div style="left:462px;top:495px;width:215px;height:19px;background:#dddddd"></div><div class="t" style="left:471px;top:498px;width:49px;text-align:right;font-size:12px;line-height:15px;font-weight:bold;letter-spacing:0.4px;color:#000099">0,065</div><div class="t" style="left:520px;top:498px;width:60px;text-align:right;font-size:12px;line-height:15px;letter-spacing:0.6px">10.000</div><div class="t" style="left:600px;top:498px;width:76.5px;text-align:right;font-size:12px;line-height:15px;letter-spacing:0.4px">13:49:40</div><div style="left:462px;top:514px;width:215px;height:19px;background:#ffffff"></div><div class="t" style="left:471px;top:517px;width:49px;text-align:right;font-size:12px;line-height:15px;font-weight:bold;letter-spacing:0.4px;color:#cc0000">0,063</div><div class="t" style="left:520px;top:517px;width:60px;text-align:right;font-size:12px;line-height:15px;letter-spacing:0.6px">5.453</div><div class="t" style="left:600px;top:517px;width:76.5px;text-align:right;font-size:12px;line-height:15px;letter-spacing:0.4px">13:45:29</div><div style="left:462px;top:533px;width:215px;height:19px;background:#ffffff"></div><div class="t" style="left:471px;top:536px;width:49px;text-align:right;font-size:12px;line-height:15px;font-weight:bold;letter-spacing:0.4px;color:#cc0000">0,063</div><div class="t" style="left:520px;top:536px;width:60px;text-align:right;font-size:12px;line-height:15px;letter-spacing:0.6px">14.547</div><div class="t" style="left:584px;top:536px;text-align:left;font-size:12px;line-height:15px;width:34px;overflow:hidden;white-space:nowrap">averag</div><div class="t" style="left:600px;top:536px;width:76.5px;text-align:right;font-size:12px;line-height:15px;letter-spacing:0.4px">13:44:56</div><div style="left:8px;top:562px;width:33px;height:4px;background:#fff;border:1px solid #000;box-sizing:border-box"></div>
</body></html>
